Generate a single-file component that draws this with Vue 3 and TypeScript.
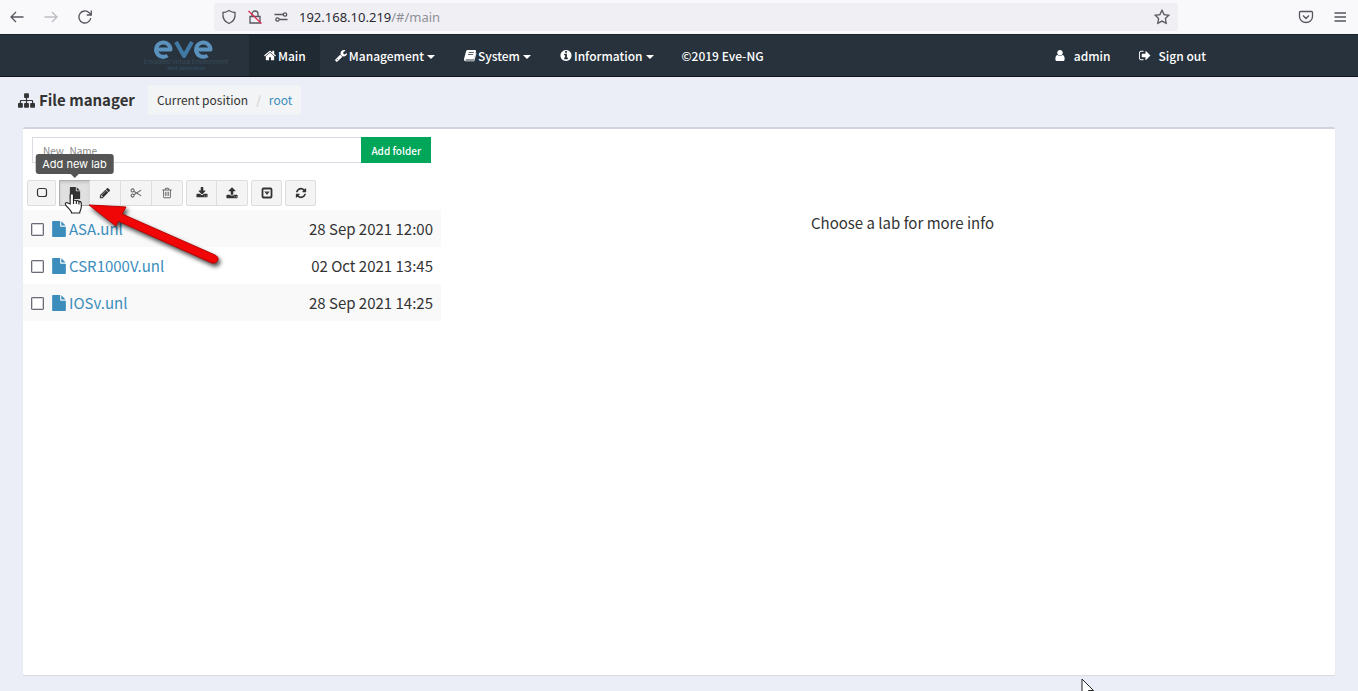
<script setup lang="ts">
import { ref } from 'vue'

interface Lab {
  name: string
  date: string
  selected: boolean
}

const labs = ref<Lab[]>([
  { name: 'ASA.unl', date: '28 Sep 2021 12:00', selected: false },
  { name: 'CSR1000V.unl', date: '02 Oct 2021 13:45', selected: false },
  { name: 'IOSv.unl', date: '28 Sep 2021 14:25', selected: false },
])
const folderName = ref('')
const address = '192.168.10.219'

const paths: Record<string, string> = {
  home: 'M1472 992v480q0 26-19 45t-45 19h-384v-384h-256v384h-384q-26 0-45-19t-19-45v-480q0-1 .5-3t.5-3l575-474 575 474q1 2 1 6zm223-69l-62 74q-8 9-21 11h-3q-13 0-21-7l-692-577-692 577q-12 8-24 7-13-2-21-11l-62-74q-8-10-7-23.5t11-21.5l719-599q32-26 76-26t76 26l244 204v-195q0-14 9-23t23-9h192q14 0 23 9t9 23v408l219 182q10 8 11 21.5t-7 23.5z',
  wrench: 'M448 1472q0-26-19-45t-45-19-45 19-19 45 19 45 45 19 45-19 19-45zm644-420l-682 682q-37 37-90 37-52 0-91-37l-106-108q-38-36-38-90 0-53 38-91l681-681q39 98 114.5 173.5t173.5 114.5zm634-435q0 39-23 106-47 134-164.5 217.5t-258.5 83.5q-185 0-316.5-131.5t-131.5-316.5 131.5-316.5 316.5-131.5q58 0 121.5 16.5t107.5 46.5q16 11 16 28t-16 28l-293 169v224l193 107q5-3 79-48.5t135.5-81 70.5-35.5q15 0 23.5 10t8.5 25z',
  user: 'M1536 1399q0 109-62.5 187t-150.5 78h-854q-88 0-150.5-78t-62.5-187q0-85 8.5-160.5t31.5-152 58.5-131 94-89 134.5-34.5q131 128 313 128t313-128q76 0 134.5 34.5t94 89 58.5 131 31.5 152 8.5 160.5zm-256-887q0 159-112.5 271.5t-271.5 112.5-271.5-112.5-112.5-271.5 112.5-271.5 271.5-112.5 271.5 112.5 112.5 271.5z',
  signout: 'M704 1440q0 4 1 20t.5 26.5-3 23.5-10 19.5-20.5 6.5h-320q-119 0-203.5-84.5t-84.5-203.5v-704q0-119 84.5-203.5t203.5-84.5h320q13 0 22.5 9.5t9.5 22.5q0 4 1 20t.5 26.5-3 23.5-10 19.5-20.5 6.5h-320q-66 0-113 47t-47 113v704q0 66 47 113t113 47h312l11.5 1 11.5 3 8 5.5 7 9 2 13.5zm928-544q0 26-19 45l-544 544q-19 19-45 19t-45-19-19-45v-288h-448q-26 0-45-19t-19-45v-384q0-26 19-45t45-19h448v-288q0-26 19-45t45-19 45 19l544 544q19 19 19 45z',
  info: 'M1152 1376v-160q0-14-9-23t-23-9h-96v-512q0-14-9-23t-23-9h-320q-14 0-23 9t-9 23v160q0 14 9 23t23 9h96v320h-96q-14 0-23 9t-9 23v160q0 14 9 23t23 9h448q14 0 23-9t9-23zm-128-896v-160q0-14-9-23t-23-9h-192q-14 0-23 9t-9 23v160q0 14 9 23t23 9h192q14 0 23-9t9-23zm640 416q0 209-103 385.5t-279.5 279.5-385.5 103-385.5-103-279.5-279.5-103-385.5 103-385.5 279.5-279.5 385.5-103 385.5 103 279.5 279.5 103 385.5z',
  sitemap: 'M1792 1248v320q0 40-28 68t-68 28h-320q-40 0-68-28t-28-68v-320q0-40 28-68t68-28h96v-192h-512v192h96q40 0 68 28t28 68v320q0 40-28 68t-68 28h-320q-40 0-68-28t-28-68v-320q0-40 28-68t68-28h96v-192h-512v192h96q40 0 68 28t28 68v320q0 40-28 68t-68 28h-320q-40 0-68-28t-28-68v-320q0-40 28-68t68-28h96v-192q0-52 38-90t90-38h512v-192h-96q-40 0-68-28t-28-68v-320q0-40 28-68t68-28h320q40 0 68 28t28 68v320q0 40-28 68t-68 28h-96v192h512q52 0 90 38t38 90v192h96q40 0 68 28t28 68z',
  file: 'M1152 512v-472q22 14 36 28l408 408q14 14 28 36h-472zm-128 32q0 40 28 68t68 28h544v1056q0 40-28 68t-68 28h-1344q-40 0-68-28t-28-68v-1600q0-40 28-68t68-28h800v544z',
  pencil: 'M491 1536l91-91-235-235-91 91v107h128v128h107zm523-928q0-22-22-22-10 0-17 7l-542 542q-7 7-7 17 0 22 22 22 10 0 17-7l542-542q7-7 7-17zm-54-192l416 416-832 832h-416v-416zm683 96q0 53-37 90l-166 166-416-416 166-165q36-38 90-38 53 0 91 38l235 234q37 39 37 91z',
  trash: 'M704 736v576q0 14-9 23t-23 9h-64q-14 0-23-9t-9-23v-576q0-14 9-23t23-9h64q14 0 23 9t9 23zm256 0v576q0 14-9 23t-23 9h-64q-14 0-23-9t-9-23v-576q0-14 9-23t23-9h64q14 0 23 9t9 23zm256 0v576q0 14-9 23t-23 9h-64q-14 0-23-9t-9-23v-576q0-14 9-23t23-9h64q14 0 23 9t9 23zm128 724v-948h-896v948q0 22 7 40.5t14.5 27 10.5 8.5h832q3 0 10.5-8.5t14.5-27 7-40.5zm-672-1076h448l-48-117q-7-9-17-11h-317q-10 2-17 11zm928 32v64q0 14-9 23t-23 9h-96v948q0 83-47 143.5t-113 60.5h-832q-66 0-113-58.5t-47-141.5v-952h-96q-14 0-23-9t-9-23v-64q0-14 9-23t23-9h309l70-167q15-37 54-63t79-26h320q40 0 79 26t54 63l70 167h309q14 0 23 9t9 23z',
  download: 'M1344 1344q0-26-19-45t-45-19-45 19-19 45 19 45 45 19 45-19 19-45zm256 0q0-26-19-45t-45-19-45 19-19 45 19 45 45 19 45-19 19-45zm128-224v320q0 40-28 68t-68 28h-1472q-40 0-68-28t-28-68v-320q0-40 28-68t68-28h465l135 136q58 56 136 56t136-56l136-136h464q40 0 68 28t28 68zm-325-569q17 41-14 70l-448 448q-18 19-45 19t-45-19l-448-448q-31-29-14-70 17-39 59-39h256v-448q0-26 19-45t45-19h256q26 0 45 19t19 45v448h256q42 0 59 39z',
  upload: 'M1344 1472q0-26-19-45t-45-19-45 19-19 45 19 45 45 19 45-19 19-45zm256 0q0-26-19-45t-45-19-45 19-19 45 19 45 45 19 45-19 19-45zm128-224v320q0 40-28 68t-68 28h-1472q-40 0-68-28t-28-68v-320q0-40 28-68t68-28h427q21 56 70.5 92t110.5 36h256q61 0 110.5-36t70.5-92h427q40 0 68 28t28 68zm-325-648q-17 40-59 40h-256v448q0 26-19 45t-45 19h-256q-26 0-45-19t-19-45v-448h-256q-42 0-59-40-17-39 14-69l448-448q18-19 45-19t45 19l448 448q31 30 14 69z',
  refresh: 'M1639 1056q0 5-1 7-64 268-268 434.5t-478 166.5q-146 0-282.5-55t-243.5-157l-129 129q-19 19-45 19t-45-19-19-45v-448q0-26 19-45t45-19h448q26 0 45 19t19 45-19 45l-137 137q71 66 161 102t187 36q134 0 250-65t186-179q11-17 53-117 8-23 30-23h192q13 0 22.5 9.5t9.5 22.5zm25-800v448q0 26-19 45t-45 19h-448q-26 0-45-19t-19-45 19-45l138-138q-148-137-349-137-134 0-250 65t-186 179q-11 17-53 117-8 23-30 23h-199q-13 0-22.5-9.5t-9.5-22.5v-7q65-268 270-434.5t480-166.5q146 0 284 55.5t245 156.5l130-129q19-19 45-19t45 19 19 45z',
}
</script>

<template>
  <div class="window">
    <header class="browser">
      <div class="history">
        <button type="button" class="tool" aria-label="Back">
          <svg width="16" height="16" viewBox="0 0 16 16" class="line"><path d="M14.5 8H2M7 3L2 8l5 5" /></svg>
        </button>
        <button type="button" class="tool faded" aria-label="Forward">
          <svg width="16" height="16" viewBox="0 0 16 16" class="line"><path d="M1.500 8H14M9 3l5 5-5 5" /></svg>
        </button>
        <button type="button" class="tool" aria-label="Reload">
          <svg width="16" height="16" viewBox="0 0 16 16" class="line"><path d="M13.800 9A6 6 0 1 1 12.200 3.800L14 5.600M14.300 1.500V6H9.800" /></svg>
        </button>
      </div>
      <div class="address">
        <svg width="16" height="16" viewBox="0 0 16 16" class="line"><path d="M8 1.500Q11 3.500 14 3.500C14.600 9 12 13 8 14.500 4 13 1.400 9 2 3.500Q5 3.500 8 1.500z" /></svg>
        <svg width="16" height="16" viewBox="0 0 16 16" class="line">
          <path d="M3 7.500h10v6.500H3zM5 7.500V5a3 3 0 0 1 6 0v2.500" />
          <path class="strike" d="M1.500 2L14.500 14.500" />
        </svg>
        <svg width="16" height="16" viewBox="0 0 16 16" class="line">
          <path d="M1.500 5.500H10M6.500 10.500h8" /><circle cx="12" cy="5.500" r="1.700" /><circle cx="4.500" cy="10.500" r="1.700" />
        </svg>
        <span class="url">{{ address }}<span class="url-path">/#/main</span></span>
        <button type="button" class="tool star" aria-label="Bookmark this page">
          <svg width="16" height="16" viewBox="0 0 16 16" class="line"><path d="M8 1.300l2.100 4.300 4.700.7-3.400 3.300.8 4.700L8 12.100l-4.200 2.200.8-4.700L1.200 6.300l4.700-.7z" /></svg>
        </button>
      </div>
      <div class="extras">
        <button type="button" class="tool" aria-label="Save to Pocket">
          <svg width="16" height="16" viewBox="0 0 16 16" class="line"><path d="M2.500 2.500h11a1 1 0 0 1 1 1V7.500a6.500 6 0 0 1-13 0V3.500a1 1 0 0 1 1-1zM5 6.500l3 3 3-3" /></svg>
        </button>
        <button type="button" class="tool" aria-label="Menu">
          <svg width="16" height="16" viewBox="0 0 16 16" class="line"><path d="M2.500 4h11.500M2.500 8h11.500M2.500 12h11.500" /></svg>
        </button>
      </div>
    </header>

    <nav class="navbar">
      <div class="nav-inner">
        <a href="#" class="brand" aria-label="EVE">
          <svg width="84" height="32" viewBox="0 0 84 32">
            <g fill="none" stroke="#5b91bd" stroke-width="4" stroke-linejoin="round">
              <path d="M13 10.500h13.500A7.200 7.200 0 1 0 23.500 16.500" />
              <path d="M32 3l8 14 8-14" stroke="#417ba5" />
              <path d="M53 10.500h13.500A7.200 7.200 0 1 0 63.500 16.500" />
            </g>
            <text x="42" y="25" class="logo-line">Emulated Virtual Environment</text>
            <text x="42" y="31" class="logo-sub">Next Generation</text>
          </svg>
        </a>
        <ul class="menu">
          <li class="current"><a href="#/main"><svg class="fa" viewBox="0 0 1792 1792"><path :d="paths.home" /></svg>Main</a></li>
          <li><a href="#"><svg class="fa" viewBox="0 0 1792 1792"><path :d="paths.wrench" /></svg>Management<i class="caret"></i></a></li>
          <li>
            <a href="#">
              <svg class="fa" viewBox="0 0 14 14">
                <path d="M4.500 1H12.500Q13.800 1.300 13.500 2.600L11.300 10.300Q11 11.200 10 11.200H2.600Q1.900 11.300 2 11.900 2.200 12.300 2.800 12.300H10.800L13.200 4.300 14 4.600 11.800 12.400Q11.500 13.300 10.500 13.300H2.300Q.5 13 .4 11.200L2.800 2.500Q3.300 1 4.500 1zM5.600 3.500L5.400 4.400H11L11.300 3.500zM5 5.600L4.700 6.500H10.300L10.600 5.600z" fill-rule="evenodd" />
              </svg>System<i class="caret"></i>
            </a>
          </li>
          <li><a href="#"><svg class="fa" viewBox="0 0 1792 1792"><path :d="paths.info" /></svg>Information<i class="caret"></i></a></li>
          <li><a href="#">©2019 Eve-NG</a></li>
        </ul>
        <ul class="menu account">
          <li><a href="#"><svg class="fa" viewBox="0 0 1792 1792"><path :d="paths.user" /></svg>admin</a></li>
          <li><a href="#"><svg class="fa" viewBox="0 0 1792 1792"><path :d="paths.signout" /></svg>Sign out</a></li>
        </ul>
      </div>
    </nav>

    <div class="heading">
      <h1><svg width="17" height="17" viewBox="0 0 1792 1792"><path :d="paths.sitemap" /></svg>File manager</h1>
      <ol class="crumbs">
        <li>Current position</li>
        <li class="slash">/</li>
        <li><a href="#">root</a></li>
      </ol>
    </div>

    <main class="panel">
      <section class="files">
        <form class="folder-form" @submit.prevent>
          <input v-model="folderName" type="text" placeholder="New_Name" aria-label="New folder name" />
          <button type="submit">Add folder</button>
        </form>
        <div class="toolbar">
          <div class="group">
            <button type="button" class="narrow" aria-label="Select all"><svg viewBox="0 0 12 12" class="outline"><rect x="1.500" y="1.500" width="9" height="8" rx="2" /></svg></button>
          </div>
          <div class="group">
            <button type="button" class="pressed" aria-label="Add new lab">
              <svg viewBox="0 0 1792 1792"><path :d="paths.file" /></svg>
              <span class="tooltip" role="tooltip">Add new lab</span>
              <svg class="hand" width="20" height="24" viewBox="0 0 20 24">
                <path d="M6.500 13V3.500a1.800 1.800 0 0 1 3.500 0V9.500q1.500-1 3 .3 1.600-.8 2.700.6 2-.4 2.500 1.600V16c0 3-1.700 4-1.700 6.500H8C8 20 3 16.500 1.500 13.500c-.6-1.700 1.400-2.600 2.600-1.500zM10 9.500V13M13 10v3M15.700 10.600V13.500" />
              </svg>
            </button>
            <button type="button" aria-label="Rename"><svg viewBox="0 0 1792 1792"><path :d="paths.pencil" /></svg></button>
            <button type="button" class="muted" aria-label="Cut">
              <svg viewBox="0 0 14 12" class="outline"><circle cx="3" cy="3" r="1.800" /><circle cx="3" cy="9" r="1.800" /><path d="M4.500 4L13 9.300M4.500 8L13 2.700" /></svg>
            </button>
            <button type="button" class="muted" aria-label="Delete"><svg viewBox="0 0 1792 1792"><path :d="paths.trash" /></svg></button>
          </div>
          <div class="group">
            <button type="button" aria-label="Import"><svg viewBox="0 0 1792 1792"><path :d="paths.download" /></svg></button>
            <button type="button" aria-label="Export"><svg viewBox="0 0 1792 1792"><path :d="paths.upload" /></svg></button>
          </div>
          <div class="group">
            <button type="button" aria-label="More"><svg viewBox="0 0 12 12" class="outline"><rect x="1.500" y="1.500" width="9" height="9" rx="1" stroke-width="1.800" /><path d="M4.500 5h3L6 7z" /></svg></button>
          </div>
          <div class="group">
            <button type="button" aria-label="Refresh"><svg viewBox="0 0 1792 1792"><path :d="paths.refresh" /></svg></button>
          </div>
        </div>
        <table class="labs">
          <tbody>
            <tr v-for="lab in labs" :key="lab.name">
              <td>
                <div class="name">
                  <input v-model="lab.selected" type="checkbox" :aria-label="lab.name" />
                  <a href="#"><svg width="18" height="16" viewBox="0 0 1792 1792"><path :d="paths.file" /></svg>{{ lab.name }}</a>
                </div>
              </td>
              <td class="date">{{ lab.date }}</td>
            </tr>
          </tbody>
        </table>
      </section>
      <section class="details">Choose a lab for more info</section>
    </main>

    <svg class="arrow" width="140" height="70" viewBox="0 0 140 70">
      <path d="M5 6L42 8 38 15 131 56Q135 58 134 61 132 65 128 64L34 22 32 27z" />
    </svg>
    <svg class="pointer" width="14" height="20" viewBox="0 0 14 20"><path d="M1 1V17L5 13.500 8 19.500 10 18.500 7.500 12.500H12.500z" /></svg>
  </div>
</template>

<style>
body {
  margin: 0;
  background: #ebeef6;
}
</style>

<style scoped>
* {
  box-sizing: border-box;
}
.window {
  position: relative;
  display: flex;
  flex-direction: column;
  min-height: 100vh;
  overflow: hidden;
  background: #ebeef6;
  color: #333;
  font-family: "Noto Sans CJK SC", "Noto Sans", sans-serif;
  font-size: 12px;
  line-height: 20px;
}
button,
input {
  font-family: inherit;
}
a {
  color: #3c8dbc;
  text-decoration: none;
}
ul,
ol {
  display: flex;
  margin: 0;
  padding: 0;
  list-style: none;
}
svg {
  flex: none;
  fill: currentColor;
}

.browser {
  display: flex;
  align-items: center;
  height: 34px;
  padding: 0 10px 0 9px;
  background: #f9f9fb;
  color: #56565f;
}
.history,
.extras {
  display: flex;
  gap: 18px;
}
.history {
  flex: 0 1 205px;
}
.tool {
  display: flex;
  padding: 0;
  border: 0;
  background: none;
  color: inherit;
}
.faded {
  color: #bcbcc2;
}
.line {
  fill: none;
  stroke: currentColor;
  stroke-width: 1.3;
}
.strike {
  stroke: #e22850;
}
.address {
  display: flex;
  flex: 1;
  align-items: center;
  gap: 10px;
  height: 28px;
  padding: 0 8px 0 7px;
  border-radius: 2px;
  background: #f0f0f4;
}
.url {
  color: #2b2a33;
  font-family: "Noto Sans", sans-serif;
  font-size: 13px;
}
.url-path {
  color: #8f8f98;
}
.star {
  margin-left: auto;
}
.extras {
  margin-left: 120px;
}

.navbar {
  height: 43px;
  border-top: 1px solid #18222a;
  border-bottom: 1px solid #0f161b;
  background: #27323c;
}
.nav-inner {
  display: flex;
  max-width: 1070px;
  height: 100%;
  margin: 0 auto;
}
.brand {
  width: 105px;
  padding-top: 4px;
}
.logo-line,
.logo-sub {
  fill: #3a4c5a;
  font-size: 6px;
  text-anchor: middle;
}
.logo-sub {
  fill: #34536a;
  font-size: 5px;
}
.menu a {
  display: flex;
  align-items: center;
  height: 100%;
  padding: 0 14px;
  color: #fff;
  font-weight: 500;
}
.current {
  background: #202a32;
}
.fa {
  width: 14px;
  height: 13px;
  margin-right: 1px;
}
.caret {
  margin: 3px 0 0 3px;
  border: 4px solid transparent;
  border-top-color: #fff;
  border-bottom: 0;
}
.account {
  margin-left: auto;
}
.account a {
  padding-right: 8px;
  padding-left: 19px;
}
.account .fa {
  margin-right: 7px;
}

.heading {
  display: flex;
  align-items: center;
  gap: 13px;
  height: 50px;
  padding: 0 18px 4px;
}
h1 {
  display: flex;
  align-items: center;
  gap: 4px;
  margin: 0;
  font-size: 15px;
  font-weight: 700;
}
.crumbs {
  gap: 8px;
  padding: 5px 9px;
  border-radius: 2px;
  background: #f3f4f5;
}
.slash {
  color: #ccc;
}

.panel {
  display: flex;
  flex: 1;
  margin: 0 23px 16px;
  border-top: 2px solid #d0d2dc;
  border-radius: 2px;
  background: #fff;
  box-shadow: 0 1px 1px #d9dce2;
}
.files {
  flex: 0 0 418px;
}
.folder-form {
  display: flex;
  margin: 8px 10px 0 9px;
}
.folder-form input {
  flex: 1;
  min-width: 0;
  height: 26px;
  padding: 0 10px;
  border: 1px solid #dadce3;
  border-right: 0;
  font-size: 10px;
}
.folder-form input::placeholder {
  color: #888;
}
.folder-form button {
  height: 26px;
  padding: 0 10px;
  border: 0;
  background: #00a65a;
  color: #fff;
  font-size: 10px;
  font-weight: 500;
}
.toolbar {
  display: flex;
  gap: 3px;
  margin: 17px 0 4px 4px;
}
.group {
  display: flex;
  border: 1px solid #ddd;
  border-radius: 2px;
  background: #f4f4f4;
}
.group button {
  position: relative;
  display: flex;
  align-items: center;
  justify-content: center;
  width: 29px;
  height: 24px;
  padding: 0;
  border: 0;
  background: none;
  color: #333;
}
.group .narrow {
  width: 27px;
}
.group button + button {
  width: 31px;
  border-left: 1px solid #ddd;
}
.group svg {
  width: 12px;
  height: 12px;
}
.group .outline {
  fill: none;
  stroke: currentColor;
  stroke-width: 1.2;
}
.group .muted {
  color: #666;
}
.group .pressed {
  background: #e0e0e0;
  box-shadow: 0 0 0 1px #adadad, inset 0 2px 3px #c8c8c8;
}
.tooltip {
  position: absolute;
  bottom: 31px;
  left: 50%;
  padding: 0 7px;
  border-radius: 3px;
  background: #555;
  color: #fff;
  font-family: Inter, sans-serif;
  font-size: 11px;
  line-height: 20px;
  white-space: nowrap;
  transform: translateX(-50%);
}
.tooltip::after {
  position: absolute;
  top: 100%;
  left: 50%;
  margin-left: -4px;
  border: 4px solid transparent;
  border-top-color: #555;
  border-bottom: 0;
  content: "";
}
.group .hand {
  position: absolute;
  top: 10px;
  left: 4px;
  width: 19px;
  height: 24px;
  fill: #fff;
  stroke: #222;
  stroke-width: 1.2;
}
.labs {
  width: 100%;
  border-collapse: collapse;
  font-size: 15px;
}
.labs td {
  height: 37px;
  padding: 0 8px;
}
.labs tr:nth-child(odd) {
  background: #f9f9f9;
}
.name,
.name a {
  display: flex;
  align-items: center;
}
.name a {
  gap: 1px;
}
.name input {
  width: 13px;
  height: 13px;
  margin: 2px 6px 0 0;
  border: 1px solid #6c6c78;
  border-radius: 1px;
  background: #fff;
  box-shadow: inset 0 0 0 1px #d0d0d6;
  appearance: none;
}
.name input:checked {
  background: #3c8dbc;
}
.labs .date {
  text-align: right;
}
.details {
  flex: 1;
  padding: 84px 0 0 29px;
  font-size: 15px;
  text-align: center;
}

.arrow {
  position: absolute;
  top: 199px;
  left: 84px;
  fill: #f00606;
  stroke: #b00;
  filter: drop-shadow(2px 3px 2px rgba(0, 0, 0, 0.7));
  pointer-events: none;
}
.pointer {
  position: absolute;
  top: 678px;
  left: 1081px;
  fill: #fff;
  stroke: #222;
  pointer-events: none;
}
</style>
